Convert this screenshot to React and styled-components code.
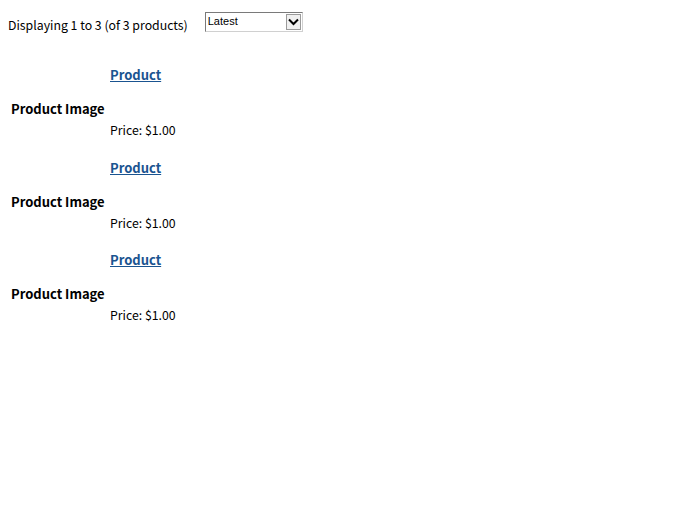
import styled, { createGlobalStyle } from 'styled-components';

const GlobalStyle = createGlobalStyle`
  body {
    margin: 0;
    background: #fff;
    font-family: "Noto Sans CJK JP", "DejaVu Sans", sans-serif;
    color: #000;
  }
`;

const Page = styled.div`
  padding: 12px 8px;
`;

const Toolbar = styled.div`
  display: flex;
  align-items: center;
  gap: 17px;
  height: 20px;
`;

const Count = styled.span`
  font-size: 12.3px;
  line-height: 14px;
  margin-top: 6px;
`;

const SortBox = styled.div`
  position: relative;
  width: 98px;
  height: 20px;
  border: 1px solid #7a7a7a;
  border-right-color: #d0d0d0;
  border-bottom-color: #d0d0d0;
  box-sizing: border-box;
  display: flex;
  align-items: center;
  font-family: "Liberation Sans", Arial, sans-serif;
  font-size: 11px;
  padding-left: 2px;
  padding-bottom: 2px;
`;

const Arrow = styled.span`
  position: absolute;
  right: 1px;
  top: 1px;
  width: 15px;
  height: 16px;
  box-sizing: border-box;
  border: 1px solid #9a9a9a;
  background: #f0f0f0;
  display: flex;
  align-items: center;
  justify-content: center;
`;

const List = styled.div`
  margin-top: 35px;
  display: flex;
  flex-direction: column;
`;

const Item = styled.div`
  display: grid;
  grid-template-columns: 102px 1fr;
  height: 92.5px;
`;

const ImageCell = styled.div`
  font-weight: bold;
  font-size: 13px;
  line-height: 16px;
  padding-left: 3px;
  padding-top: 34px;
  white-space: nowrap;
`;

const Info = styled.div`
  display: flex;
  flex-direction: column;
`;

const Name = styled.a`
  font-weight: bold;
  font-size: 13px;
  line-height: 16px;
  color: #1a5490;
  text-decoration: underline;
  align-self: flex-start;
`;

const Price = styled.span`
  font-size: 12.3px;
  line-height: 14px;
  margin-top: 40px;
`;

const products = [1, 2, 3];

export default function App() {
  return (
    <Page>
      <GlobalStyle />
      <Toolbar>
        <Count>Displaying 1 to 3 (of 3 products)</Count>
        <SortBox>
          Latest
          <Arrow>
            <svg width="11" height="8" viewBox="0 0 11 8">
              <path d="M1 1.5 L5.5 6 L10 1.5" fill="none" stroke="#000" strokeWidth="2" />
            </svg>
          </Arrow>
        </SortBox>
      </Toolbar>
      <List>
        {products.map((p) => (
          <Item key={p}>
            <ImageCell>Product Image</ImageCell>
            <Info>
              <Name href="#">Product</Name>
              <Price>Price: $1.00</Price>
            </Info>
          </Item>
        ))}
      </List>
    </Page>
  );
}
